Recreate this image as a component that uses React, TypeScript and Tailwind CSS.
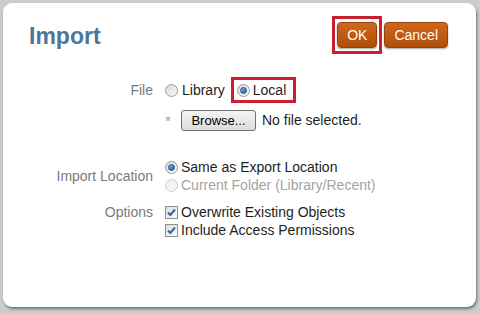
import type { ReactNode } from 'react';

function Radio({ checked = false, disabled = false }: { checked?: boolean; disabled?: boolean }) {
  return (
    <span
      className={`flex h-[13px] w-[13px] shrink-0 items-center justify-center rounded-full border ${
        disabled
          ? 'border-[#cfcfcf] bg-[#f3f3f3]'
          : 'border-[#9c9c9c] bg-gradient-to-br from-[#d9d9d9] to-[#fbfbfb]'
      }`}
    >
      {checked && (
        <span className="h-[7px] w-[7px] rounded-full border border-[#1d4f86] bg-gradient-to-br from-[#7fb6e8] to-[#1a5ea6]" />
      )}
    </span>
  );
}

function Checkbox() {
  return (
    <span className="flex h-[13px] w-[13px] shrink-0 items-center justify-center border border-[#8e8f8f] bg-gradient-to-br from-[#dedede] to-[#fdfdfd]">
      <svg viewBox="0 0 11 11" className="h-[11px] w-[11px]">
        <path d="M2 5.5 L4.3 8 L9 2.5" fill="none" stroke="#3563ab" strokeWidth={2} />
      </svg>
    </span>
  );
}

function Row({ label, children, className = '' }: { label?: string; children: ReactNode; className?: string }) {
  return (
    <div className={`flex ${className}`}>
      <div className="w-[150px] shrink-0 text-right text-[#7a7a7a]">{label}</div>
      <div className="ml-[12px] flex flex-col">{children}</div>
    </div>
  );
}

function OrangeButton({ children }: { children: ReactNode }) {
  return (
    <button
      type="button"
      className="h-[26px] rounded-[4px] border border-[#97420a] bg-gradient-to-b from-[#d0671a] to-[#b04e08] px-[9px] text-[14px] leading-none text-white shadow-[0_1px_2px_rgba(0,0,0,0.35)]"
    >
      {children}
    </button>
  );
}

export default function App() {
  return (
    <div
      className="h-[313px] w-[480px] overflow-hidden bg-[#cdcdcd] pt-[3px] pl-[3px] text-[14px] text-[#1e1e1e]"
      style={{ fontFamily: '"Liberation Sans", Arial, sans-serif' }}
    >
      <div className="h-[304px] w-[473px] rounded-[9px] bg-white shadow-[1px_2px_3px_rgba(0,0,0,0.45)]">
        {/* Header */}
        <div className="flex items-center justify-between pt-[13px] pl-[26px] pr-[28px]">
          <h1 className="mt-[3px] text-[23px] font-bold leading-none text-[#4f7699]">Import</h1>
          <div className="flex items-center gap-[2px]">
            <div className="border-[3px] border-[#c8202e] px-[2px] py-[3px]">
              <OrangeButton>OK</OrangeButton>
            </div>
            <OrangeButton>Cancel</OrangeButton>
          </div>
        </div>

        {/* File */}
        <Row label="File" className="mt-[23px] h-[26px] items-center">
          <div className="flex items-center">
            <Radio />
            <span className="ml-[4px]">Library</span>
            <div className="ml-[6px] flex h-[26px] items-center border-[3px] border-[#c8202e] pl-[3px] pr-[7px]">
              <Radio checked />
              <span className="ml-[3px]">Local</span>
            </div>
          </div>
        </Row>

        {/* Browse */}
        <Row className="mt-[7px] h-[21px] items-center">
          <div className="flex items-center">
            <span className="w-[16px] text-[15px] leading-none text-[#8ea6c2]">*</span>
            <button
              type="button"
              className="h-[21px] w-[75px] rounded-[3px] border border-[#707070] bg-gradient-to-b from-[#f4f4f4] to-[#dcdcdc] text-[13px] leading-none text-black"
            >
              Browse...
            </button>
            <span className="ml-[6px]">No file selected.</span>
          </div>
        </Row>

        {/* Import Location */}
        <Row label="Import Location" className="mt-[27px] items-center">
          <div className="flex h-[18px] items-center">
            <Radio checked />
            <span className="ml-[3px]">Same as Export Location</span>
          </div>
          <div className="flex h-[18px] items-center">
            <Radio disabled />
            <span className="ml-[3px] text-[#a3a3a3]">Current Folder (Library/Recent)</span>
          </div>
        </Row>

        {/* Options */}
        <Row label="Options" className="mt-[9px] leading-[18px]">
          <div className="flex h-[18px] items-center">
            <Checkbox />
            <span className="ml-[3px]">Overwrite Existing Objects</span>
          </div>
          <div className="flex h-[18px] items-center">
            <Checkbox />
            <span className="ml-[3px]">Include Access Permissions</span>
          </div>
        </Row>
      </div>
    </div>
  );
}
